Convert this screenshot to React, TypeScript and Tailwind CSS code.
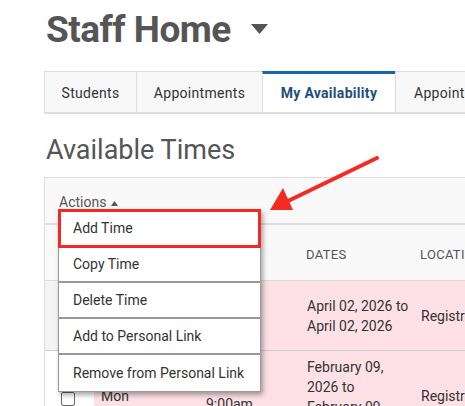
import React from "react";

const menuItems = ["Copy Time", "Delete Time", "Add to Personal Link", "Remove from Personal Link"];

export default function App() {
  return (
    <div className="relative w-[465px] h-[406px] overflow-hidden bg-white font-['Roboto',sans-serif] text-[#333]">
      <div className="pl-[44px] w-[700px]">
        {/* Title */}
        <div className="h-[71px] flex items-start pt-[7px] pl-[2px]">
          <h1 className="text-[37px] leading-[46px] font-bold text-[#555] tracking-[-0.5px]">Staff Home</h1>
          <svg className="ml-[20px] mt-[17px]" width="17" height="10" viewBox="0 0 17 10">
            <path d="M0 0 L17 0 L8.5 10 Z" fill="#555" />
          </svg>
        </div>

        {/* Tabs */}
        <div className="flex h-[43px] border-b-2 border-[#ddd] text-[14px] tracking-[0.3px]">
          <div className="w-[92px] flex items-center justify-center pt-[3px] bg-[#f8f8f8] border-t border-l border-[#ddd]">Students</div>
          <div className="w-[126px] flex items-center justify-center pt-[3px] bg-[#f8f8f8] border-t border-l border-[#ddd]">Appointments</div>
          <div className="w-[133px] flex items-center justify-center pt-[1px] bg-white border-t-[3px] border-t-[#1565a8] border-l border-[#ddd] font-bold text-[#1d4f7c]">
            My Availability
          </div>
          <div className="w-[170px] flex items-center pl-[18px] pt-[3px] whitespace-nowrap bg-[#f8f8f8] border-t border-l border-r border-[#ddd]">Appointment Types</div>
        </div>

        {/* Section title */}
        <div className="h-[63px] pl-[2px] pt-[20px]">
          <h2 className="text-[27px] leading-[32px] text-[#555]">Available Times</h2>
        </div>

        {/* Table */}
        <div className="border-t border-l border-[#ddd]">
          <div className="h-[47px] bg-[#f9f9f9] border-b-2 border-[#ddd] flex items-center pl-[14px] pt-[4px] text-[14px] text-[#555]">
            <span className="underline underline-offset-[3px]">Actions</span>
            <svg className="ml-[5px] mt-[2px]" width="7" height="5" viewBox="0 0 7 5">
              <path d="M0 5 L3.5 0 L7 5 Z" fill="#555" />
            </svg>
          </div>
          <div className="grid grid-cols-[49px_105px_101px_114px_200px] h-[56px] pt-[5px] bg-[#f9f9f9] border-b border-[#ddd] items-center text-[13px] text-[#555] tracking-[0.3px]">
            <div />
            <div />
            <div />
            <div className="pl-[6px]">DATES</div>
            <div className="pl-[6px] whitespace-nowrap">LOCATION</div>
          </div>
          <div className="grid grid-cols-[49px_105px_101px_114px_200px] h-[70px] border-b border-[#ccc] text-[14px] leading-[20px]">
            <div className="bg-[#f4f4f4]" />
            <div className="bg-[#fde1e7]" />
            <div className="bg-[#fde1e7]" />
            <div className="bg-[#fde1e7] pl-[7px] flex flex-col justify-center whitespace-nowrap">
              <span>April 02, 2026 to</span>
              <span>April 02, 2026</span>
            </div>
            <div className="bg-[#fde1e7] pl-[7px] flex items-center">Registration</div>
          </div>
          <div className="grid grid-cols-[49px_105px_101px_114px_200px] h-[90px] text-[14px] leading-[20px]">
            <div className="bg-white pl-[16px] pt-[41px]">
              <div className="w-[14px] h-[14px] border border-[#666] rounded-[2px] bg-white" />
            </div>
            <div className="bg-[#fde1e7] pl-[7px] pt-[35px]">Mon</div>
            <div className="bg-[#fde1e7] pl-[7px] pt-[43px]">9:00am</div>
            <div className="bg-[#fde1e7] pl-[7px] pt-[6px] flex flex-col">
              <span>February 09,</span>
              <span>2026 to</span>
              <span>February 09,</span>
            </div>
            <div className="bg-[#fde1e7] pl-[7px] pt-[35px]">Registration</div>
          </div>
        </div>
      </div>

      {/* Actions dropdown */}
      <div className="absolute left-[58px] top-[209px] w-[203px] bg-white border border-[#999] shadow-[2px_3px_5px_rgba(0,0,0,0.35)] text-[14px] text-[#333]">
        <div className="h-[39px] border-[3px] border-[#f22a22] -m-px flex items-center pl-[12px]">Add Time</div>
        {menuItems.map((item, i) => (
          <div
            key={item}
            className={`h-[36px] flex items-center pl-[14px] ${i < menuItems.length - 1 ? "border-b-2 border-[#999]" : ""}`}
          >
            {item}
          </div>
        ))}
      </div>

      {/* Red arrow */}
      <svg className="absolute left-0 top-0 pointer-events-none" width="465" height="406">
        <line x1="377" y1="158" x2="288" y2="201" stroke="#f32b22" strokeWidth="4" strokeLinecap="round" />
        <path d="M270 210 L283 188 L293 210 Z" fill="#f32b22" />
      </svg>
    </div>
  );
}
